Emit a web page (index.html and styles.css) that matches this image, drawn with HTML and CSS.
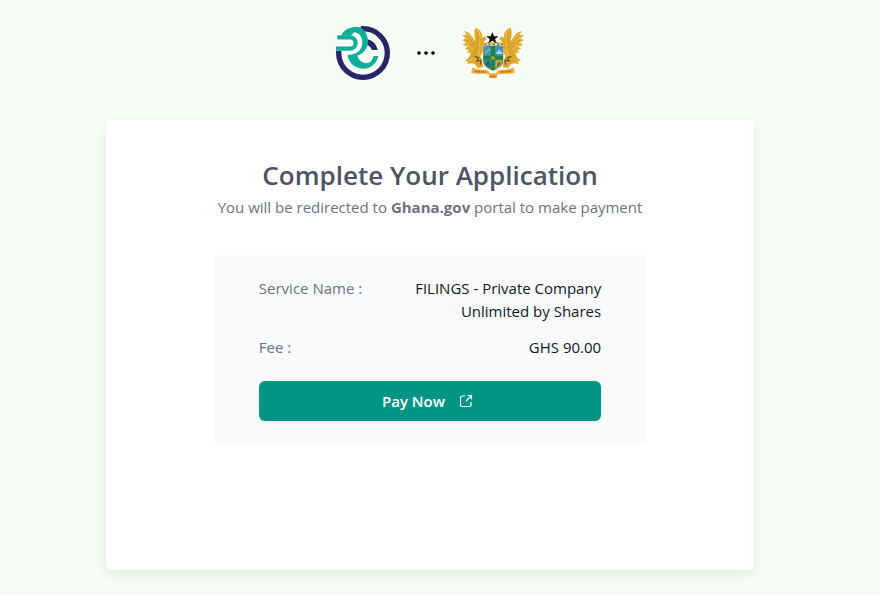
FILE: index.html
```html
<!DOCTYPE html>
<html lang="en">
<head>
<meta charset="utf-8">
<meta name="viewport" content="width=device-width, initial-scale=1">
<title>Complete Your Application</title>
<link rel="stylesheet" href="styles.css">
</head>
<body>
<header class="brands">
  <svg class="logo" viewBox="18 18 162 162" role="img" aria-label="Registrar logo">
    <circle cx="99" cy="99" r="73" fill="none" stroke="#2b2466" stroke-width="16"/>
    <path d="M14 93V46L44 14H92V38L66 93Z" fill="#f7fcf7"/>
    <path d="M111 57Q138 64 143 90H126Q121 77 105 73Z" fill="#2b2466"/>
    <path d="M34 46Q50 20 82 20C101 22 114 42 114 64C114 85 102 101 82 107C87 124 103 132 116 128Q127 124 131 108H145C141 130 123 146 101 146C74 145 55 128 53 104C79 106 97 90 97 67C97 47 83 35 66 36Q58 36 52 46Z" fill="#0eae9a"/>
    <path d="M22 52H60A17 17 0 0 1 60 86H18" fill="none" stroke="#0eae9a" stroke-width="13"/>
    <path d="M34 46Q44 30 58 25L72 38L61 47Z" fill="#0eae9a"/>
  </svg>
  <svg class="dots" viewBox="0 0 18 4" aria-hidden="true"><circle cx="2" cy="2" r="1.8"/><circle cx="9" cy="2" r="1.8"/><circle cx="16" cy="2" r="1.8"/></svg>
  <svg class="crest" viewBox="20 18 186 162" role="img" aria-label="Coat of arms of Ghana">
    <g id="eagle">
      <path d="M60 23Q76 28 80 43L81 55L89 49L94 57L86 65L83 76L82 96L75 109L80 119L84 142L67 144L59 132L48 130L36 132L38 123L28 124L41 112L46 98L33 98L42 91L28 86L38 80L23 74L33 68L21 60L31 56L21 46L34 44L26 33Q43 36 53 54L61 65Q54 40 60 23Z" fill="#dfa82c"/>
      <path d="M30 39Q45 44 54 66M27 51Q44 55 53 76M28 64Q43 66 52 82M33 77Q45 76 53 90M64 29Q75 36 75 54M65 42Q73 50 72 68M74 68Q72 85 60 101L42 123M76 88Q66 103 70 125" fill="none" stroke="#f2ca4d" stroke-width="3"/>
      <path d="M34 46Q47 55 55 76M32 60Q45 65 52 82M66 38Q74 51 67 69M68 77Q68 92 49 113" fill="none" stroke="#b87d1c" stroke-width="2"/>
      <path d="M58 109L70 113L65 123L77 121L75 134" fill="none" stroke="#6d5722" stroke-width="4"/>
    </g>
    <use href="#eagle" transform="translate(226 0) scale(-1 1)"/>
    <path d="M84 79Q98 74 113 78Q128 74 143 79V126Q140 143 113 151Q87 143 84 126Z" fill="#3794cb" stroke="#b78d32" stroke-width="2"/>
    <path d="M86 120H106V147Q86 140 86 120Z" fill="#347f8c"/>
    <path d="M120 120H141Q139 141 120 147Z" fill="#c4a53a"/>
    <path d="M107 78H119V149L113 151L107 149ZM84 107H143V119H84Z" fill="#148746"/>
    <path d="M107 78V106H84M119 78V106H143M107 149V120H85M119 149V120H142" fill="none" stroke="#9a6642" stroke-width="1"/>
    <path d="M89 100L103 87" stroke="#b5b85b" stroke-width="4"/>
    <path d="M123 102H140V95H136L131 87L127 95H123Z" fill="#a5d6e8"/>
    <ellipse cx="113" cy="114" rx="7" ry="5" fill="#a5a236"/>
    <path d="M91 137L99 127L102 139M126 139L133 127" fill="none" stroke="#245556" stroke-width="4"/>
    <path d="M82 74Q98 66 113 70Q129 66 145 74" fill="none" stroke="#d7ab3b" stroke-width="5"/>
    <path d="M86 74H142" stroke="#327452" stroke-width="3" stroke-dasharray="7 6"/>
    <path d="M111 36L116 49H130L119 57L124 70L111 62L99 70L103 57L92 49H106Z" fill="#14120c"/>
    <path d="M51 142Q67 151 96 149L104 160H122L130 149Q159 151 175 142L179 158Q158 164 139 161L125 164V174H101V164L87 161Q68 164 47 158Z" fill="#edb43f"/>
    <path d="M58 154L91 156M135 156L168 154M104 170H122" fill="none" stroke="#bd5528" stroke-width="5" stroke-dasharray="4 2"/>
  </svg>
</header>
<main class="card">
  <h1>Complete Your Application</h1>
  <p class="intro">You will be redirected to <strong>Ghana.gov</strong> portal to make payment</p>
  <section class="summary">
    <dl>
      <div class="row"><dt>Service Name :</dt><dd>FILINGS - Private Company Unlimited by Shares</dd></div>
      <div class="row"><dt>Fee :</dt><dd>GHS 90.00</dd></div>
    </dl>
    <button class="pay" type="button">Pay Now
      <svg viewBox="0 0 14 14" aria-hidden="true"><path d="M6 2H3Q1.500 2 1.500 3.500V11Q1.500 12.500 3 12.500H10.500Q12 12.500 12 11V8M8.500 1.500H12.500V5.500M12.500 1.500L7 7"/></svg>
    </button>
  </section>
</main>
</body>
</html>
```
FILE: styles.css
```css
* {
  box-sizing: border-box;
}

body {
  margin: 0;
  padding: 24px 20px 24px 0;
  background: #f7fcf7;
  font: 15px/23px "Open Sans", "Noto Sans", sans-serif;
  color: #111827;
}

.brands {
  display: flex;
  align-items: center;
  justify-content: center;
  gap: 27px;
  height: 58px;
  margin-bottom: 38px;
}

.logo {
  width: 54px;
  height: 54px;
}

.dots {
  width: 18px;
  height: 4px;
}

.crest {
  width: 62px;
  height: 54px;
}

.card {
  width: 75.4%;
  min-height: 450px;
  margin: 0 auto;
  padding: 36px 24px;
  border-radius: 5px;
  background: #fff;
  box-shadow: 0 4px 12px rgb(0 0 0 / 8%);
  text-align: center;
}

h1 {
  margin: 0 0 2px;
  color: #4b5563;
  font-size: 26px;
  font-weight: 600;
  line-height: 38px;
}

.intro {
  margin: 0 0 36px;
  color: #6b7280;
}

.summary {
  width: 72%;
  margin: 0 auto;
  padding: 22px 45px 23px;
  background: #f9fafc;
}

dl {
  margin: 0 0 22px;
}

.row {
  display: flex;
  justify-content: space-between;
  gap: 24px;
}

.row + .row {
  margin-top: 13px;
}

dt {
  flex-shrink: 0;
  color: #6b7280;
}

dd {
  max-width: 200px;
  margin: 0;
  text-align: right;
}

.pay {
  display: flex;
  align-items: center;
  justify-content: center;
  gap: 14px;
  width: 100%;
  height: 40px;
  padding: 0 5px 0 0;
  border: 0;
  border-radius: 6px;
  background: #009485;
  box-shadow: 0 1px 2px rgb(0 0 0 / 10%);
  color: #fff;
  font: inherit;
  font-weight: 600;
}

.pay svg {
  width: 14px;
  height: 14px;
  fill: none;
  stroke: currentColor;
  stroke-width: 1.2;
}
```
